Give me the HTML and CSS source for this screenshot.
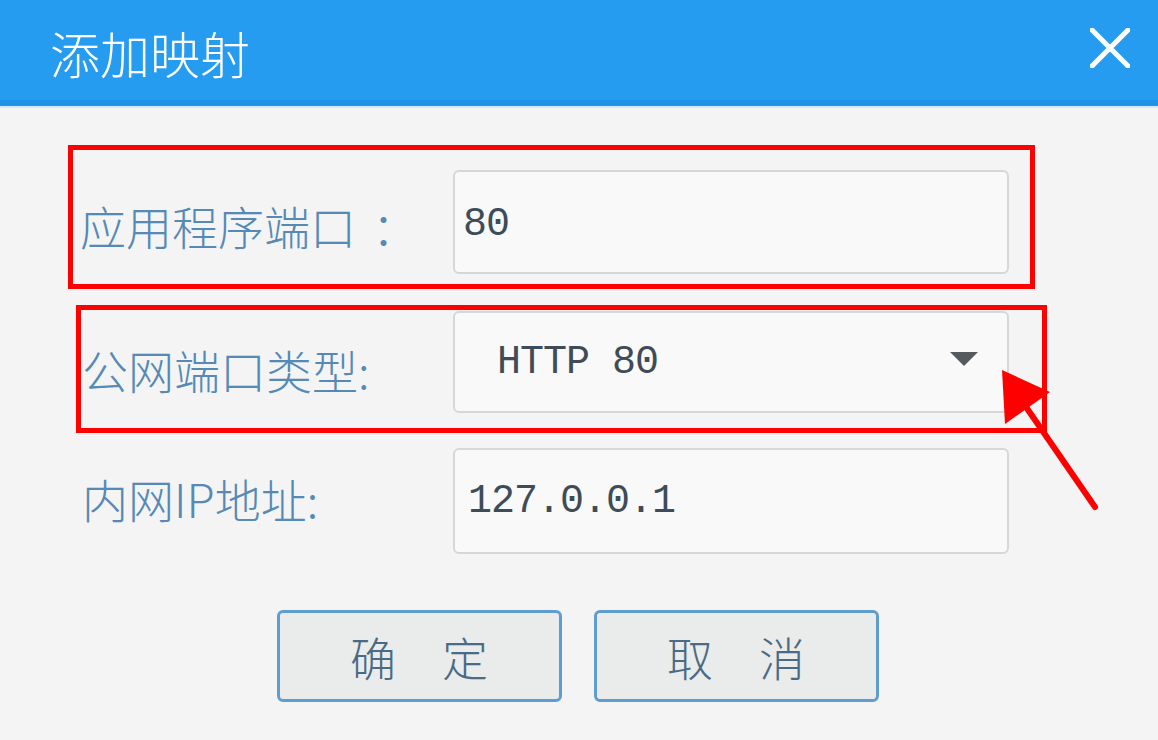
FILE: index.html
```html
<!DOCTYPE html>
<html lang="zh-CN">
<head>
<meta charset="utf-8">
<title>添加映射</title>
<link rel="stylesheet" href="styles.css">
</head>
<body>
<div class="dialog">
  <div class="header">
    <div class="title">添加映射</div>
    <svg class="close" width="40" height="40" viewBox="0 0 40 40">
      <path d="M2 2 L38 38 M38 2 L2 38" stroke="#ffffff" stroke-width="5" stroke-linecap="round" fill="none"/>
    </svg>
  </div>
  <div class="form">
    <div class="row row-app mark">
      <div class="label">应用程序端口<span class="colon">：</span></div>
      <div class="field"><span class="value">80</span></div>
    </div>
    <div class="row row-type mark">
      <div class="label">公网端口类型:</div>
      <div class="field select"><span class="value">HTTP 80</span><span class="caret"></span></div>
    </div>
    <div class="row row-ip">
      <div class="label">内网IP地址:</div>
      <div class="field"><span class="value">127.0.0.1</span></div>
    </div>
    <div class="actions">
      <div class="btn">确　定</div>
      <div class="btn">取　消</div>
    </div>
  </div>
  <svg class="arrow" width="1158" height="740" viewBox="0 0 1158 740">
    <line x1="1095" y1="507" x2="1024" y2="404" stroke="#ff0000" stroke-width="6" stroke-linecap="round"/>
    <polygon points="1002,370 1050,392 1005,424" fill="#ff0000"/>
  </svg>
</div>
</body>
</html>
```

FILE: styles.css
```css
html, body {
  margin: 0;
  padding: 0;
}
body {
  width: 1158px;
  height: 740px;
  overflow: hidden;
  background: #f3f4f3;
  font-family: "Noto Sans CJK SC", "Noto Sans", sans-serif;
}
.dialog {
  position: relative;
  width: 1158px;
  height: 740px;
}
.header {
  height: 100px;
  background: #259cf0;
  border-bottom: 6px solid #1f93e8;
  box-shadow: 0 2px 0 #d6ebfa;
  display: flex;
  align-items: center;
  justify-content: space-between;
  padding: 0 28px 0 50px;
}
.title {
  color: #ffffff;
  font-size: 50px;
  font-weight: 300;
  line-height: 60px;
  margin-top: 4px;
}
.close {
  display: block;
  margin-top: -4px;
}
.form {
  padding-top: 39px;
}
.row {
  display: flex;
  align-items: center;
  box-sizing: border-box;
  border: 5px solid transparent;
}
.row.mark {
  border-color: #ff0000;
}
.row-app {
  margin-left: 68px;
  width: 967px;
  height: 144px;
  padding: 20px 21px 10px 7px;
}
.row-type {
  margin-left: 76px;
  margin-top: 16px;
  width: 971px;
  height: 128px;
  padding: 1px 33px 15px 1px;
}
.row-ip {
  margin-left: 76px;
  margin-top: 10px;
  width: 971px;
  height: 116px;
  padding: 0 33px 0 1px;
}
.label {
  flex: 1;
  color: #5589b6;
  font-size: 46px;
  font-weight: 300;
  line-height: 60px;
  white-space: nowrap;
}
.colon {
  margin-left: 16px;
}
.row-app .label {
  padding-top: 6px;
}
.row-type .label {
  padding-top: 14px;
}
.row-ip .label {
  padding-bottom: 6px;
}
.field {
  flex: 0 0 556px;
  box-sizing: border-box;
  height: 104px;
  background: #f8f9f8;
  border: 2px solid #d6d8d8;
  border-radius: 6px;
  display: flex;
  align-items: center;
  padding-left: 8px;
}
.row-type .field {
  height: 102px;
  padding-left: 42px;
  padding-right: 29px;
}
.row-ip .field {
  height: 106px;
  padding-left: 13px;
}
.value {
  font-family: "Liberation Mono", "DejaVu Sans Mono", monospace;
  font-size: 40px;
  letter-spacing: -1px;
  color: #3e4c57;
}
.row-app .value {
  margin-top: 4px;
}
.row-type .value {
  margin-top: 0;
}
.caret {
  margin-left: auto;
  width: 0;
  height: 0;
  border-left: 14px solid transparent;
  border-right: 14px solid transparent;
  border-top: 14px solid #555a5e;
  margin-top: -6px;
}
.actions {
  display: flex;
  justify-content: center;
  gap: 32px;
  margin-top: 51px;
  padding-right: 3px;
}
.btn {
  box-sizing: border-box;
  width: 285px;
  height: 92px;
  border: 3px solid #5f9dd0;
  border-radius: 6px;
  background: #eaebeb;
  color: #4a6b86;
  font-size: 46px;
  font-weight: 300;
  display: flex;
  align-items: center;
  justify-content: center;
}
.arrow {
  position: absolute;
  left: 0;
  top: 0;
  pointer-events: none;
}
```
